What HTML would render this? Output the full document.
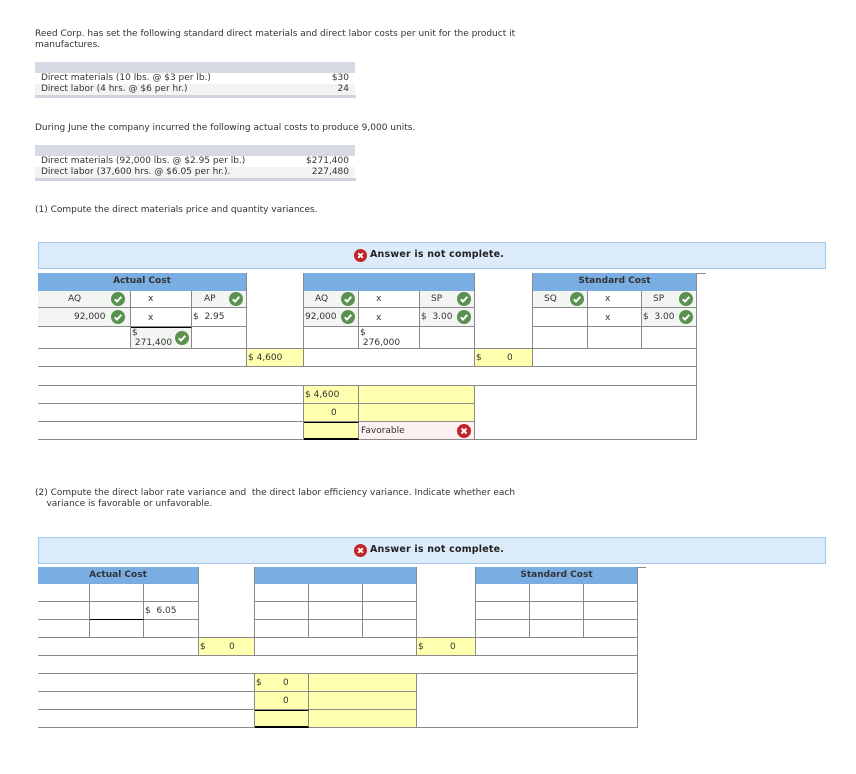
<!DOCTYPE html>
<html><head><meta charset="utf-8"><style>
*{margin:0;padding:0}
body{width:856px;height:774px;background:#fff;position:relative;font-family:"DejaVu Sans","Liberation Sans",sans-serif;font-size:9px;color:#333;overflow:hidden}
.a{position:absolute;white-space:nowrap}
.c{position:absolute;box-sizing:border-box;border-right:1px solid #8a8a8a;border-bottom:1px solid #8a8a8a;font-size:9px;color:#333;white-space:nowrap}
.g{background:#f3f5f3}
.y{background:#ffffb0}
.h{position:absolute;background:#7aaee2;font-weight:bold;font-size:9px;color:#333;text-align:center;line-height:17px;box-sizing:border-box;border-right:1px solid #8a8a8a}
.t{position:absolute}
.ban{position:absolute;left:38px;width:788px;height:27px;background:#dcebf9;border:1px solid #a5c8ea;box-sizing:border-box}
.ban span{position:absolute;left:331px;top:6px;font-weight:bold;font-size:9.5px;letter-spacing:0.2px;color:#222}
.ban svg{position:absolute;left:315px;top:6px}
.ck{position:absolute;width:14px;height:14px}
</style></head><body>
<svg width="0" height="0" style="position:absolute"><defs>
<symbol id="ok" viewBox="0 0 14 14"><circle cx="7" cy="7" r="7" fill="#5b9150"/><path d="M3.8 7.3 L6 9.5 L10.3 4.8" stroke="#fff" stroke-width="2" fill="none"/></symbol>
<symbol id="no" viewBox="0 0 14 14"><circle cx="7" cy="7" r="7" fill="#c1242b"/><path d="M4.5 4.5 L9.5 9.5 M9.5 4.5 L4.5 9.5" stroke="#fff" stroke-width="2"/></symbol>
</defs></svg>

<div class="a" style="left:35px;top:29px;line-height:11px">Reed Corp. has set the following standard direct materials and direct labor costs per unit for the product it<br>manufactures.</div>

<div class="a" style="left:35px;top:62px;width:320px;height:11px;background:#d7dae4"></div>
<div class="a" style="left:35px;top:84px;width:320px;height:11px;background:#f3f3f3"></div>
<div class="a" style="left:35px;top:95px;width:321px;height:3px;background:#d0d3dd"></div>
<div class="a" style="left:41px;top:73px;line-height:11px">Direct materials (10 lbs. @ $3 per lb.)<br>Direct labor (4 hrs. @ $6 per hr.)</div>
<div class="a" style="left:300px;top:73px;width:49px;text-align:right;line-height:11px">$30<br>24</div>

<div class="a" style="left:35px;top:123px">During June the company incurred the following actual costs to produce 9,000 units.</div>

<div class="a" style="left:35px;top:145px;width:320px;height:11px;background:#d7dae4"></div>
<div class="a" style="left:35px;top:167px;width:320px;height:11px;background:#f3f3f3"></div>
<div class="a" style="left:35px;top:178px;width:321px;height:3px;background:#d0d3dd"></div>
<div class="a" style="left:41px;top:156px;line-height:11px">Direct materials (92,000 lbs. @ $2.95 per lb.)<br>Direct labor (37,600 hrs. @ $6.05 per hr.).</div>
<div class="a" style="left:280px;top:156px;width:69px;text-align:right;line-height:11px">$271,400<br>227,480</div>

<div class="a" style="left:35px;top:205px">(1) Compute the direct materials price and quantity variances.</div>

<div class="ban" style="top:242px"><svg width="13" height="13"><use href="#no"/></svg><span>Answer is not complete.</span></div>

<div class="h" style="left:38px;top:273px;width:209px;height:18px">Actual Cost</div>
<div class="c" style="left:247px;top:273px;width:57px;height:76px"></div>
<div class="h" style="left:304px;top:273px;width:171px;height:18px"></div>
<div class="c" style="left:475px;top:273px;width:58px;height:76px"></div>
<div class="h" style="left:533px;top:273px;width:164px;height:18px">Standard Cost</div>
<div class="a" style="left:697px;top:273px;width:9px;height:1px;background:#8a8a8a"></div>

<div class="c g" style="left:38px;top:291px;width:93px;height:17px"><span class="t" style="left:30px;top:3px">AQ</span><svg class="ck" style="left:73px;top:1px"><use href="#ok"/></svg></div>
<div class="c" style="left:131px;top:291px;width:61px;height:17px"><span class="t" style="left:17px;top:3px">x</span></div>
<div class="c g" style="left:192px;top:291px;width:55px;height:17px"><span class="t" style="left:12px;top:3px">AP</span><svg class="ck" style="left:37px;top:1px"><use href="#ok"/></svg></div>
<div class="c g" style="left:304px;top:291px;width:55px;height:17px"><span class="t" style="left:11px;top:3px">AQ</span><svg class="ck" style="left:37px;top:1px"><use href="#ok"/></svg></div>
<div class="c" style="left:359px;top:291px;width:61px;height:17px"><span class="t" style="left:17px;top:3px">x</span></div>
<div class="c g" style="left:420px;top:291px;width:55px;height:17px"><span class="t" style="left:11px;top:3px">SP</span><svg class="ck" style="left:37px;top:1px"><use href="#ok"/></svg></div>
<div class="c g" style="left:533px;top:291px;width:55px;height:17px"><span class="t" style="left:11px;top:3px">SQ</span><svg class="ck" style="left:37px;top:1px"><use href="#ok"/></svg></div>
<div class="c" style="left:588px;top:291px;width:54px;height:17px"><span class="t" style="left:17px;top:3px">x</span></div>
<div class="c g" style="left:642px;top:291px;width:55px;height:17px"><span class="t" style="left:11px;top:3px">SP</span><svg class="ck" style="left:37px;top:1px"><use href="#ok"/></svg></div>

<div class="c g" style="left:38px;top:308px;width:93px;height:19px"><span class="t" style="left:36px;top:4px">92,000</span><svg class="ck" style="left:73px;top:2px"><use href="#ok"/></svg></div>
<div class="c" style="left:131px;top:308px;width:61px;height:19px"><span class="t" style="left:17px;top:5px">x</span></div>
<div class="c" style="left:192px;top:308px;width:55px;height:19px"><span class="t" style="left:1px;top:4px">$&nbsp;&nbsp;2.95</span></div>
<div class="c g" style="left:304px;top:308px;width:55px;height:19px"><span class="t" style="left:1px;top:4px">92,000</span><svg class="ck" style="left:37px;top:2px"><use href="#ok"/></svg></div>
<div class="c" style="left:359px;top:308px;width:61px;height:19px"><span class="t" style="left:17px;top:5px">x</span></div>
<div class="c g" style="left:420px;top:308px;width:55px;height:19px"><span class="t" style="left:1px;top:4px">$&nbsp;&nbsp;3.00</span><svg class="ck" style="left:37px;top:2px"><use href="#ok"/></svg></div>
<div class="c" style="left:533px;top:308px;width:55px;height:19px"></div>
<div class="c" style="left:588px;top:308px;width:54px;height:19px"><span class="t" style="left:17px;top:5px">x</span></div>
<div class="c g" style="left:642px;top:308px;width:55px;height:19px"><span class="t" style="left:1px;top:4px">$&nbsp;&nbsp;3.00</span><svg class="ck" style="left:37px;top:2px"><use href="#ok"/></svg></div>

<div class="c" style="left:38px;top:327px;width:93px;height:22px"></div>
<div class="c g" style="left:131px;top:327px;width:61px;height:22px;border-top:1px solid #000"><span class="t" style="left:1px;top:0px;line-height:10px">$<br>&nbsp;271,400</span><svg class="ck" style="left:44px;top:3px"><use href="#ok"/></svg></div>
<div class="c" style="left:192px;top:327px;width:55px;height:22px"></div>
<div class="c" style="left:304px;top:327px;width:55px;height:22px"></div>
<div class="c" style="left:359px;top:327px;width:61px;height:22px"><span class="t" style="left:1px;top:1px;line-height:10px">$<br>&nbsp;276,000</span></div>
<div class="c" style="left:420px;top:327px;width:55px;height:22px"></div>
<div class="c" style="left:533px;top:327px;width:55px;height:22px"></div>
<div class="c" style="left:588px;top:327px;width:54px;height:22px"></div>
<div class="c" style="left:642px;top:327px;width:55px;height:22px"></div>

<div class="c" style="left:38px;top:349px;width:209px;height:18px"></div>
<div class="c y" style="left:247px;top:349px;width:57px;height:18px"><span class="t" style="left:1px;top:4px">$&nbsp;4,600</span></div>
<div class="c" style="left:304px;top:349px;width:171px;height:18px"></div>
<div class="c y" style="left:475px;top:349px;width:58px;height:18px"><span class="t" style="left:1px;top:4px">$</span><span class="t" style="left:32px;top:4px">0</span></div>
<div class="c" style="left:533px;top:349px;width:164px;height:18px"></div>
<div class="c" style="left:38px;top:367px;width:659px;height:19px"></div>

<div class="c" style="left:38px;top:386px;width:266px;height:18px"></div>
<div class="c" style="left:38px;top:404px;width:266px;height:18px"></div>
<div class="c" style="left:38px;top:422px;width:266px;height:18px"></div>
<div class="c y" style="left:304px;top:386px;width:55px;height:18px"><span class="t" style="left:1px;top:4px">$&nbsp;4,600</span></div>
<div class="c y" style="left:359px;top:386px;width:116px;height:18px"></div>
<div class="c y" style="left:304px;top:404px;width:55px;height:18px"><span class="t" style="left:27px;top:4px">0</span></div>
<div class="c y" style="left:359px;top:404px;width:116px;height:18px"></div>
<div class="c y" style="left:304px;top:422px;width:55px;height:18px;border-top:1px solid #000;border-bottom:2px solid #000"></div>
<div class="c" style="left:359px;top:422px;width:116px;height:18px;background:#fdf0f0"><span class="t" style="left:2px;top:4px">Favorable</span><svg class="ck" style="left:98px;top:2px"><use href="#no"/></svg></div>
<div class="c" style="left:475px;top:386px;width:222px;height:54px"></div>

<div class="a" style="left:35px;top:488px;line-height:11px">(2) Compute the direct labor rate variance and &nbsp;the direct labor efficiency variance. Indicate whether each<br>&nbsp;&nbsp;&nbsp;&nbsp;variance is favorable or unfavorable.</div>

<div class="ban" style="top:537px"><svg width="13" height="13"><use href="#no"/></svg><span>Answer is not complete.</span></div>

<div class="h" style="left:38px;top:567px;width:161px;height:17px">Actual Cost</div>
<div class="c" style="left:199px;top:567px;width:56px;height:71px"></div>
<div class="h" style="left:255px;top:567px;width:162px;height:17px"></div>
<div class="c" style="left:417px;top:567px;width:59px;height:71px"></div>
<div class="h" style="left:476px;top:567px;width:162px;height:17px">Standard Cost</div>
<div class="a" style="left:638px;top:567px;width:8px;height:1px;background:#8a8a8a"></div>

<div class="c" style="left:38px;top:584px;width:52px;height:18px"></div>
<div class="c" style="left:90px;top:584px;width:54px;height:18px"></div>
<div class="c" style="left:144px;top:584px;width:55px;height:18px"></div>
<div class="c" style="left:38px;top:602px;width:52px;height:18px"></div>
<div class="c" style="left:90px;top:602px;width:54px;height:18px;border-bottom:1px solid #000"></div>
<div class="c" style="left:144px;top:602px;width:55px;height:18px"><span class="t" style="left:1px;top:4px">$&nbsp;&nbsp;6.05</span></div>
<div class="c" style="left:38px;top:620px;width:52px;height:18px"></div>
<div class="c" style="left:90px;top:620px;width:54px;height:18px"></div>
<div class="c" style="left:144px;top:620px;width:55px;height:18px"></div>

<div class="c" style="left:255px;top:584px;width:54px;height:18px"></div>
<div class="c" style="left:309px;top:584px;width:54px;height:18px"></div>
<div class="c" style="left:363px;top:584px;width:54px;height:18px"></div>
<div class="c" style="left:255px;top:602px;width:54px;height:18px"></div>
<div class="c" style="left:309px;top:602px;width:54px;height:18px"></div>
<div class="c" style="left:363px;top:602px;width:54px;height:18px"></div>
<div class="c" style="left:255px;top:620px;width:54px;height:18px"></div>
<div class="c" style="left:309px;top:620px;width:54px;height:18px"></div>
<div class="c" style="left:363px;top:620px;width:54px;height:18px"></div>

<div class="c" style="left:476px;top:584px;width:54px;height:18px"></div>
<div class="c" style="left:530px;top:584px;width:54px;height:18px"></div>
<div class="c" style="left:584px;top:584px;width:54px;height:18px"></div>
<div class="c" style="left:476px;top:602px;width:54px;height:18px"></div>
<div class="c" style="left:530px;top:602px;width:54px;height:18px"></div>
<div class="c" style="left:584px;top:602px;width:54px;height:18px"></div>
<div class="c" style="left:476px;top:620px;width:54px;height:18px"></div>
<div class="c" style="left:530px;top:620px;width:54px;height:18px"></div>
<div class="c" style="left:584px;top:620px;width:54px;height:18px"></div>

<div class="c" style="left:38px;top:638px;width:161px;height:18px"></div>
<div class="c y" style="left:199px;top:638px;width:56px;height:18px"><span class="t" style="left:1px;top:4px">$</span><span class="t" style="left:30px;top:4px">0</span></div>
<div class="c" style="left:255px;top:638px;width:162px;height:18px"></div>
<div class="c y" style="left:417px;top:638px;width:59px;height:18px"><span class="t" style="left:1px;top:4px">$</span><span class="t" style="left:33px;top:4px">0</span></div>
<div class="c" style="left:476px;top:638px;width:162px;height:18px"></div>
<div class="c" style="left:38px;top:656px;width:600px;height:18px"></div>

<div class="c" style="left:38px;top:674px;width:217px;height:18px"></div>
<div class="c" style="left:38px;top:692px;width:217px;height:18px"></div>
<div class="c" style="left:38px;top:710px;width:217px;height:18px"></div>
<div class="c y" style="left:255px;top:674px;width:54px;height:18px"><span class="t" style="left:1px;top:4px">$</span><span class="t" style="left:28px;top:4px">0</span></div>
<div class="c y" style="left:309px;top:674px;width:108px;height:18px"></div>
<div class="c y" style="left:255px;top:692px;width:54px;height:18px"><span class="t" style="left:28px;top:4px">0</span></div>
<div class="c y" style="left:309px;top:692px;width:108px;height:18px"></div>
<div class="c y" style="left:255px;top:710px;width:54px;height:18px;border-top:1px solid #000;border-bottom:2px solid #000"></div>
<div class="c y" style="left:309px;top:710px;width:108px;height:18px"></div>
<div class="c" style="left:417px;top:674px;width:221px;height:54px"></div>
</body></html>
